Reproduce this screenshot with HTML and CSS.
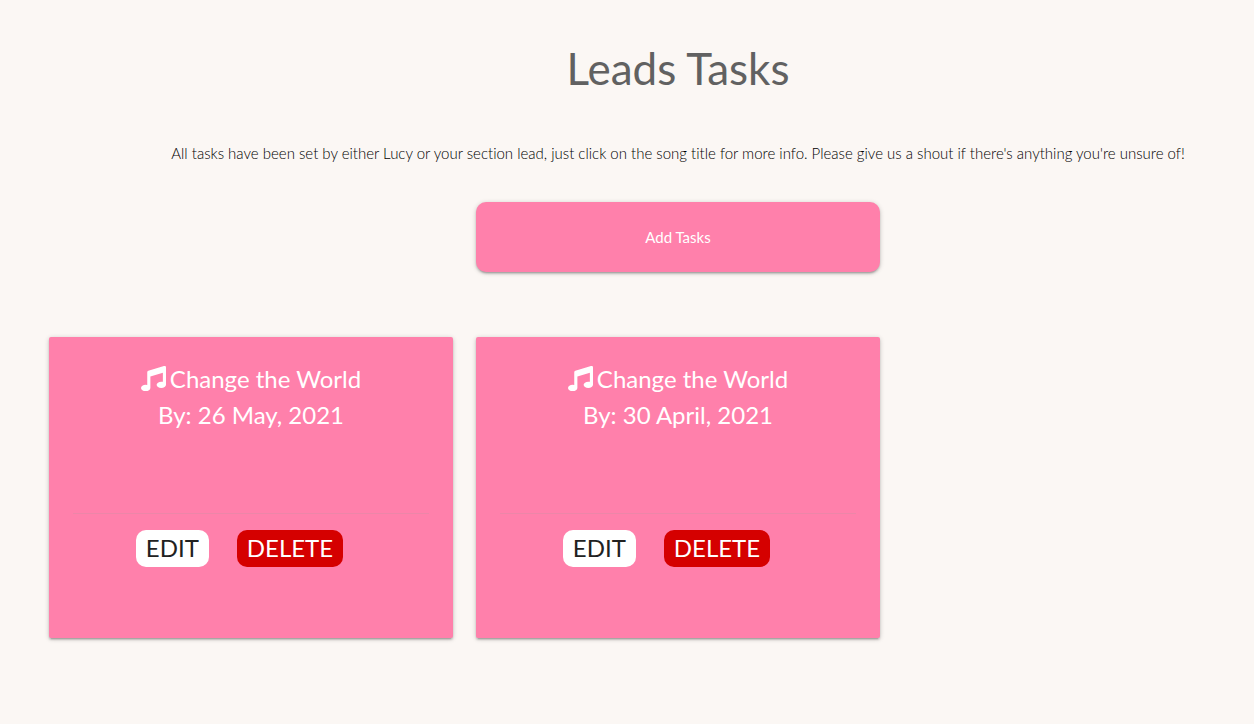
FILE: index.html
```html
<!DOCTYPE html>
<html lang="en">
<head>
<meta charset="utf-8">
<meta name="viewport" content="width=device-width, initial-scale=1">
<title>Leads Tasks</title>
<link rel="stylesheet" href="styles.css">
</head>
<body>
<svg class="sprite" aria-hidden="true">
  <symbol id="music" viewBox="0 0 512 512">
    <path fill="currentColor" d="M470.380 1.510L150.410 96A32 32 0 0 0 128 126.510v261.410A139 139 0 0 0 96 384c-53 0-96 28.660-96 64s43 64 96 64 96-28.660 96-64V214.320l256-75v184.610a138.400 138.400 0 0 0-32-3.930c-53 0-96 28.660-96 64s43 64 96 64 96-28.650 96-64V32a32 32 0 0 0-41.620-30.490z"/>
  </symbol>
</svg>
<main class="page">
  <h1 class="title">Leads Tasks</h1>
  <p class="intro">All tasks have been set by either Lucy or your section lead, just click on the song title for more info. Please give us a shout if there's anything you're unsure of!</p>
  <div class="grid">
    <a class="add" href="#add">Add Tasks</a>
  </div>
  <div class="grid cards">
    <article class="card">
      <h2 class="song"><svg class="icon" aria-hidden="true"><use href="#music"/></svg>Change the World<br>By: 26 May, 2021</h2>
      <div class="actions">
        <a class="btn edit" href="#edit">EDIT</a>
        <a class="btn delete" href="#delete">DELETE</a>
      </div>
    </article>
    <article class="card">
      <h2 class="song"><svg class="icon" aria-hidden="true"><use href="#music"/></svg>Change the World<br>By: 30 April, 2021</h2>
      <div class="actions">
        <a class="btn edit" href="#edit">EDIT</a>
        <a class="btn delete" href="#delete">DELETE</a>
      </div>
    </article>
  </div>
</main>
</body>
</html>
```
FILE: styles.css
```css
* { box-sizing: border-box; }

body {
  margin: 0;
  overflow-x: hidden;
  background: #fbf7f4;
  color: #212121;
  font-family: Lato, "Liberation Sans", sans-serif;
  font-size: 15px;
  font-variant-ligatures: none;
  line-height: 22px;
}

a { color: inherit; text-decoration: none; }

.sprite { position: absolute; width: 0; height: 0; }

/* The three-column row runs past the right edge of the viewport. */
.page {
  margin: 0 -53px 0 49px;
  padding: 43px 0 80px;
}

.title {
  margin: 0;
  color: #616161;
  font-size: 44px;
  font-weight: 400;
  line-height: 50px;
  text-align: center;
}

.intro {
  margin: 49px 0 38px;
  color: #000;
  font-weight: 300;
  text-align: center;
}

.grid {
  display: grid;
  grid-template-columns: repeat(3, 1fr);
  column-gap: 23px;
}

.add, .card {
  background: #ff80ab;
  color: #fff;
  text-align: center;
  box-shadow: 0 2px 2px 0 rgba(0, 0, 0, 0.14), 0 3px 1px -2px rgba(0, 0, 0, 0.12), 0 1px 5px 0 rgba(0, 0, 0, 0.2);
}

.add {
  grid-column: 2;
  padding: 24px;
  border-radius: 10px;
}

.cards { margin-top: 65px; }

.card {
  display: flex;
  flex-direction: column;
  min-height: 301px;
  padding: 24px 24px 0;
  border-radius: 2px;
}

.song {
  margin: 0;
  min-height: 152px;
  font-size: 24px;
  font-weight: 400;
  line-height: 36px;
}

.icon {
  width: 25px;
  height: 25px;
  margin-right: 4px;
  vertical-align: -3px;
}

.actions {
  display: flex;
  justify-content: center;
  gap: 28px;
  padding: 16px 23px 70px 0;
  border-top: 1px solid rgba(160, 160, 160, 0.2);
}

.btn {
  padding: 0 10px 1px;
  border-radius: 10px;
  font-size: 24px;
  line-height: 36px;
}

.edit { background: #fff; color: #212121; }
.delete { background: #d50000; color: #fff; }
```
